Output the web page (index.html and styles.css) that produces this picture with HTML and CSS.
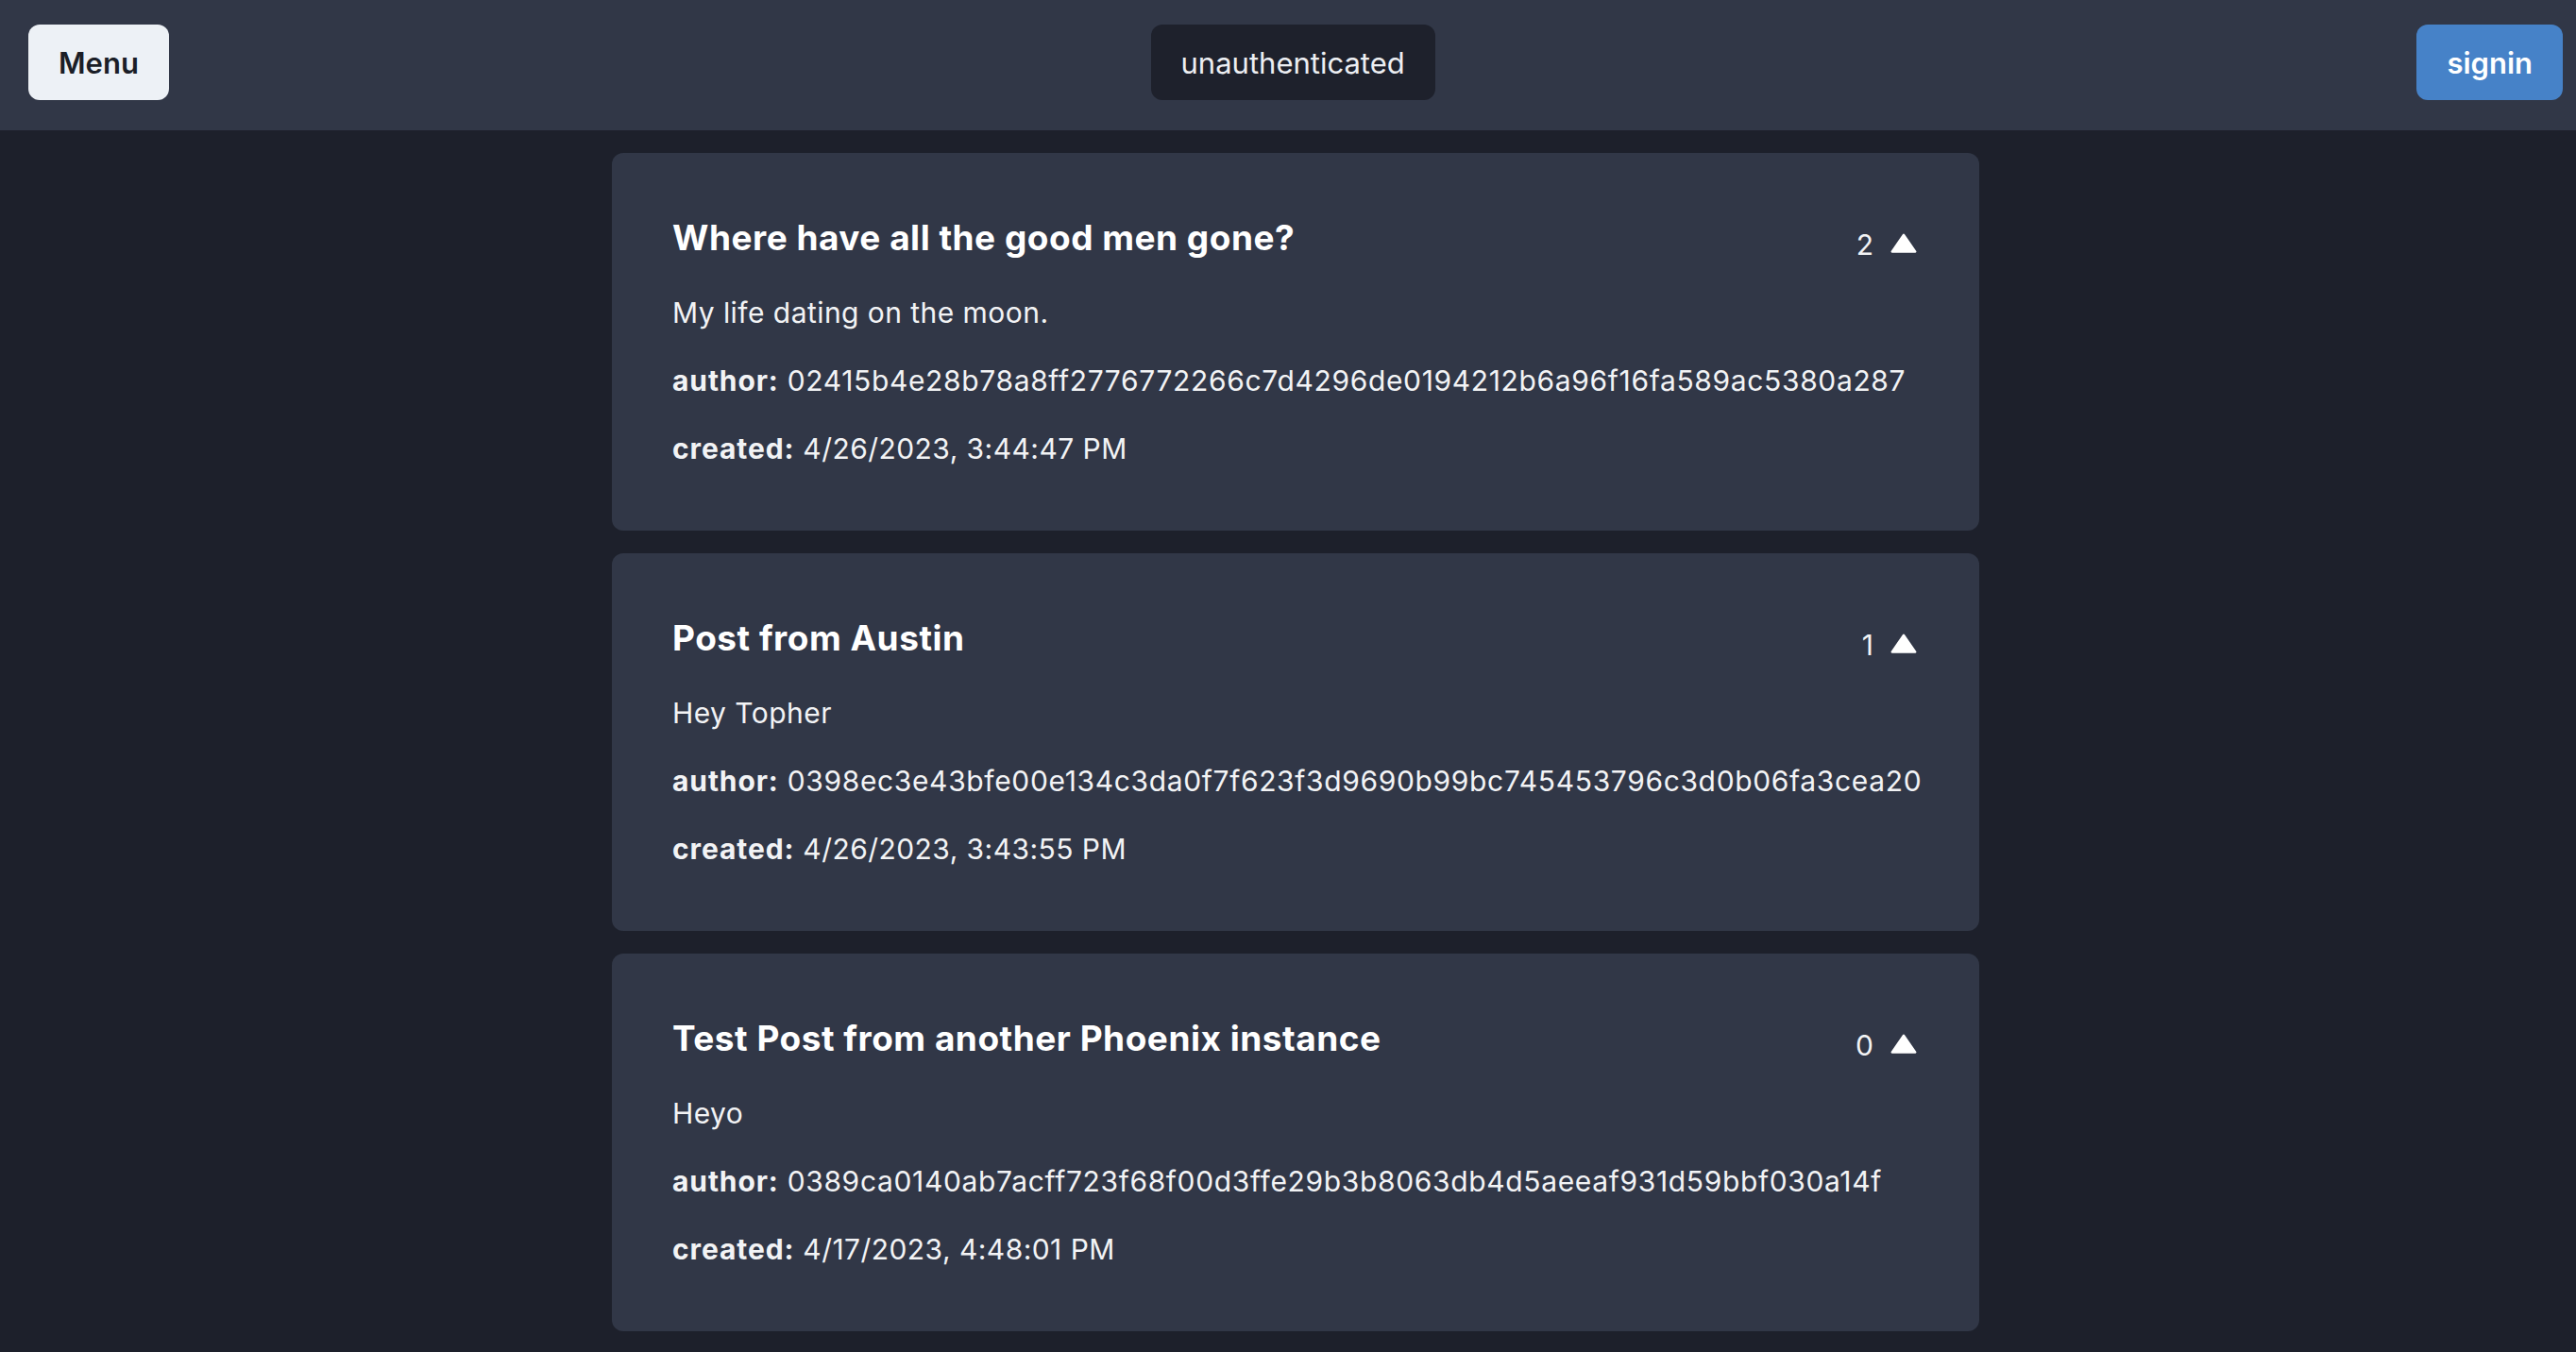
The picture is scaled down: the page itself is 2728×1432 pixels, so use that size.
FILE: index.html
```html
<!DOCTYPE html>
<html lang="en">
<head>
<meta charset="utf-8">
<title>Posts</title>
<link rel="stylesheet" href="styles.css">
</head>
<body>
<header class="topbar">
  <button class="btn btn-menu">Menu</button>
  <div class="status">unauthenticated</div>
  <button class="btn btn-signin">signin</button>
</header>
<main class="feed">
  <article class="post">
    <div class="post-head">
      <h2 class="post-title">Where have all the good men gone?</h2>
      <div class="vote"><span class="vote-count">2</span><svg class="vote-icon" viewBox="0 0 24 24"><path fill="currentColor" d="M21.873 17.007L12.82 3.93a1.09 1.09 0 0 0-1.64 0L2.127 17.007a.9.9 0 0 0 .82 1.493h18.106a.9.9 0 0 0 .82-1.493z"/></svg></div>
    </div>
    <p class="post-body">My life dating on the moon.</p>
    <p class="post-meta"><b>author:</b> <span class="hash">02415b4e28b78a8ff2776772266c7d4296de0194212b6a96f16fa589ac5380a287</span></p>
    <p class="post-meta"><b>created:</b> 4/26/2023, 3:44:47 PM</p>
  </article>
  <article class="post">
    <div class="post-head">
      <h2 class="post-title">Post from Austin</h2>
      <div class="vote"><span class="vote-count">1</span><svg class="vote-icon" viewBox="0 0 24 24"><path fill="currentColor" d="M21.873 17.007L12.82 3.93a1.09 1.09 0 0 0-1.64 0L2.127 17.007a.9.9 0 0 0 .82 1.493h18.106a.9.9 0 0 0 .82-1.493z"/></svg></div>
    </div>
    <p class="post-body">Hey Topher</p>
    <p class="post-meta"><b>author:</b> <span class="hash">0398ec3e43bfe00e134c3da0f7f623f3d9690b99bc745453796c3d0b06fa3cea20</span></p>
    <p class="post-meta"><b>created:</b> 4/26/2023, 3:43:55 PM</p>
  </article>
  <article class="post">
    <div class="post-head">
      <h2 class="post-title">Test Post from another Phoenix instance</h2>
      <div class="vote"><span class="vote-count">0</span><svg class="vote-icon" viewBox="0 0 24 24"><path fill="currentColor" d="M21.873 17.007L12.82 3.93a1.09 1.09 0 0 0-1.64 0L2.127 17.007a.9.9 0 0 0 .82 1.493h18.106a.9.9 0 0 0 .82-1.493z"/></svg></div>
    </div>
    <p class="post-body">Heyo</p>
    <p class="post-meta"><b>author:</b> <span class="hash">0389ca0140ab7acff723f68f00d3ffe29b3b8063db4d5aeeaf931d59bbf030a14f</span></p>
    <p class="post-meta"><b>created:</b> 4/17/2023, 4:48:01 PM</p>
  </article>
</main>
</body>
</html>
```

FILE: styles.css
```css
* { box-sizing: border-box; }

html, body {
  margin: 0;
  padding: 0;
}

body {
  background: #1d202b;
  color: #f2f3f5;
  font-family: Inter, "Noto Sans", "Liberation Sans", sans-serif;
  overflow: hidden;
}

.topbar {
  display: flex;
  justify-content: space-between;
  align-items: center;
  background: #313747;
  padding: 26px 14px 32px 30px;
}

.btn {
  height: 80px;
  border: none;
  border-radius: 12px;
  padding: 0 32px;
  font-family: inherit;
  font-size: 31px;
  font-weight: 600;
  cursor: pointer;
}

.btn-menu {
  background: #edf1f6;
  color: #1b1e27;
}

.btn-signin {
  background: #4682c8;
  color: #ffffff;
}

.status {
  height: 80px;
  display: flex;
  align-items: center;
  padding: 0 32px;
  border-radius: 12px;
  background: #1e212c;
  color: #eceef2;
  font-size: 31px;
  font-weight: 400;
}

.feed {
  display: flex;
  flex-direction: column;
  align-items: center;
  gap: 24px;
  padding: 24px 0 0 16px;
}

.post {
  width: 1448px;
  height: 400px;
  background: #313747;
  border-radius: 12px;
  padding: 68px 64px 0 64px;
}

.post-head {
  display: flex;
  justify-content: space-between;
  align-items: flex-start;
}

.post-title {
  margin: 0;
  font-size: 37px;
  line-height: 43px;
  font-weight: 700;
  letter-spacing: 0.5px;
  color: #ffffff;
}

.vote {
  display: flex;
  align-items: center;
  margin-top: 13px;
}

.vote-count {
  font-size: 30px;
  line-height: 32px;
  margin-right: 16px;
}

.vote-icon {
  width: 32px;
  height: 32px;
  color: #ffffff;
  display: block;
}

.post-body,
.post-meta {
  margin: 0;
  font-size: 30px;
  line-height: 42px;
  letter-spacing: 0.45px;
}

.post-body {
  margin-top: 35px;
}

.post-meta {
  margin-top: 30px;
  white-space: nowrap;
}

.post-meta b {
  font-weight: 700;
  letter-spacing: 0.9px;
}

.hash {
  letter-spacing: 0.65px;
}
```
